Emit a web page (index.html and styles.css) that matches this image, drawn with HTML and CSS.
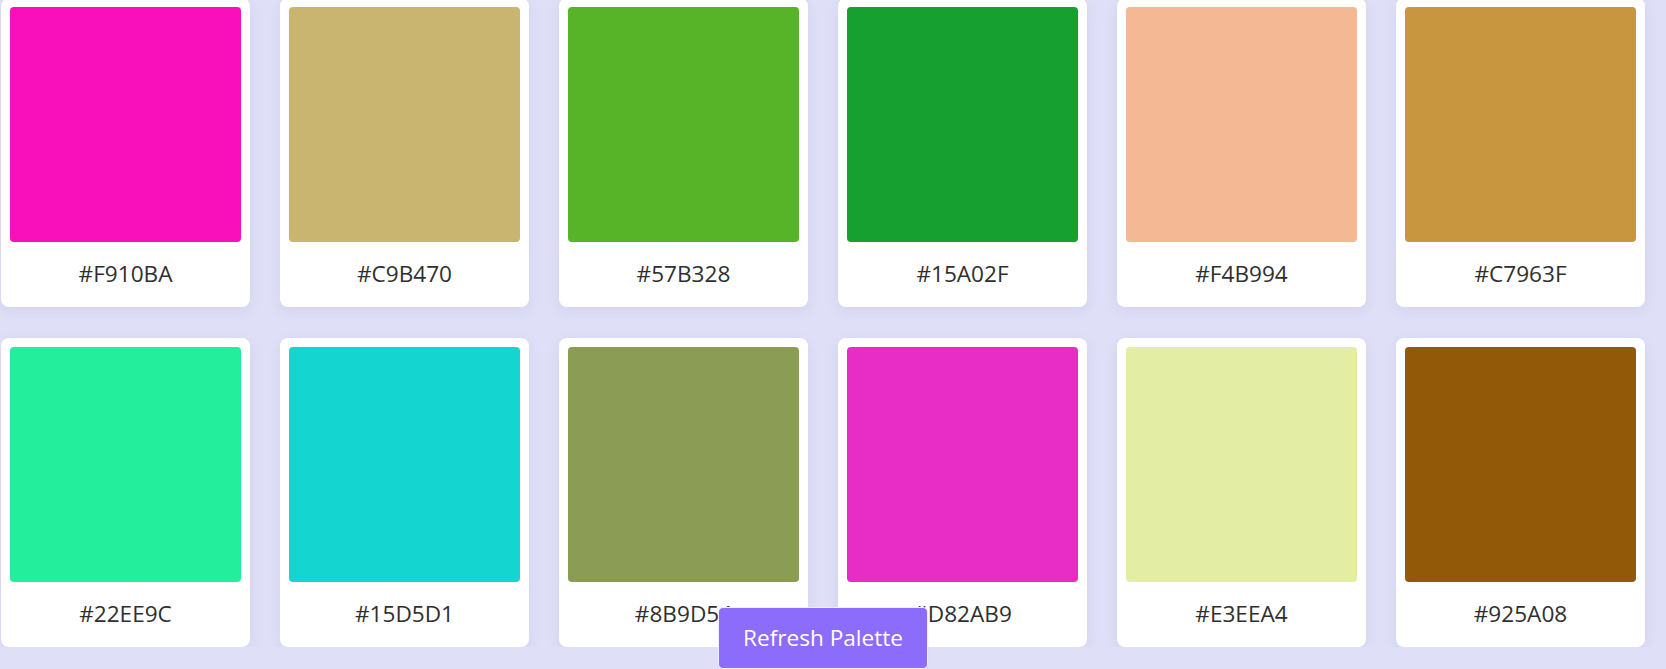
FILE: index.html
```html
<!DOCTYPE html>
<html lang="en">
<head>
<meta charset="utf-8">
<title>Palette</title>
<link rel="stylesheet" href="styles.css">
</head>
<body>
<main class="palette">
  <div class="card"><div class="swatch" style="background:#F910BA"></div><div class="label">#F910BA</div></div>
  <div class="card"><div class="swatch" style="background:#C9B470"></div><div class="label">#C9B470</div></div>
  <div class="card"><div class="swatch" style="background:#57B328"></div><div class="label">#57B328</div></div>
  <div class="card"><div class="swatch" style="background:#15A02F"></div><div class="label">#15A02F</div></div>
  <div class="card"><div class="swatch" style="background:#F4B994"></div><div class="label">#F4B994</div></div>
  <div class="card"><div class="swatch" style="background:#C7963F"></div><div class="label">#C7963F</div></div>
  <div class="card"><div class="swatch" style="background:#22EE9C"></div><div class="label">#22EE9C</div></div>
  <div class="card"><div class="swatch" style="background:#15D5D1"></div><div class="label">#15D5D1</div></div>
  <div class="card"><div class="swatch" style="background:#8B9D54"></div><div class="label">#8B9D54</div></div>
  <div class="card"><div class="swatch" style="background:#E82CC6"></div><div class="label">#D82AB9</div></div>
  <div class="card"><div class="swatch" style="background:#E3EEA4"></div><div class="label">#E3EEA4</div></div>
  <div class="card"><div class="swatch" style="background:#925A08"></div><div class="label">#925A08</div></div>
</main>
<button class="refresh" type="button">Refresh Palette</button>
</body>
</html>
```

FILE: styles.css
```css
html, body {
  margin: 0;
  padding: 0;
  background: #dfdff7;
  font-family: "Open Sans", "Noto Sans", sans-serif;
  overflow: hidden;
}

.palette {
  display: grid;
  grid-template-columns: repeat(6, 249px);
  gap: 31px 30px;
  margin: -2px 0 0 1px;
}

.card {
  background: #ffffff;
  border-radius: 8px;
  padding: 9px;
  box-shadow: 0 4px 14px rgba(60, 60, 160, 0.07);
  display: flex;
  flex-direction: column;
}

.swatch {
  height: 235px;
  border-radius: 4px;
}

.label {
  padding: 17px 0 9px;
  line-height: 30px;
  font-size: 22.6px;
  color: #2f2f2f;
  text-align: center;
}

.refresh {
  position: fixed;
  left: 823px;
  bottom: 0;
  transform: translateX(-50%);
  width: 210px;
  height: 62px;
  padding: 0;
  background: #8c6cfa;
  color: #ffffff;
  border: 1px solid #f2f0ff;
  border-radius: 5px;
  font-family: "Open Sans", "Noto Sans", sans-serif;
  font-size: 22.6px;
  line-height: 30px;
  cursor: pointer;
}
```
